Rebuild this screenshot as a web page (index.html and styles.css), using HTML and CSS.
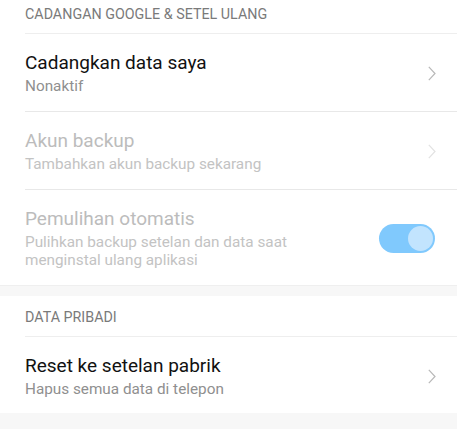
FILE: index.html
```html
<!DOCTYPE html>
<html lang="id">
<head>
  <meta charset="UTF-8">
  <meta name="viewport" content="width=device-width, initial-scale=1.0">
  <title>Cadangan &amp; setel ulang</title>
  <link rel="stylesheet" href="styles.css">
</head>
<body>
  <div class="page">
    <!-- Cadangan Google -->
    <div class="section">
      <div class="section-title first">CADANGAN GOOGLE &amp; SETEL ULANG</div>
      <div class="list">
        <div class="row">
          <div class="row-text">
            <div class="row-title">Cadangkan data saya</div>
            <div class="row-sub">Nonaktif</div>
          </div>
          <svg class="chevron" width="8" height="15" viewBox="0 0 8 15"><polyline points="0.8,0.8 7,7.5 0.8,14.2" fill="none" stroke="currentColor" stroke-width="1.2"/></svg>
        </div>
        <div class="row disabled">
          <div class="row-text">
            <div class="row-title">Akun backup</div>
            <div class="row-sub">Tambahkan akun backup sekarang</div>
          </div>
          <svg class="chevron" width="8" height="15" viewBox="0 0 8 15"><polyline points="0.8,0.8 7,7.5 0.8,14.2" fill="none" stroke="currentColor" stroke-width="1.2"/></svg>
        </div>
        <div class="row disabled last">
          <div class="row-text">
            <div class="row-title">Pemulihan otomatis</div>
            <div class="row-sub">Pulihkan backup setelan dan data saat<br>menginstal ulang aplikasi</div>
          </div>
          <div class="toggle on"><span class="knob"></span></div>
        </div>
      </div>
    </div>

    <div class="gap"></div>

    <!-- Data pribadi -->
    <div class="section">
      <div class="section-title">DATA PRIBADI</div>
      <div class="list">
        <div class="row last short">
          <div class="row-text">
            <div class="row-title">Reset ke setelan pabrik</div>
            <div class="row-sub">Hapus semua data di telepon</div>
          </div>
          <svg class="chevron" width="8" height="15" viewBox="0 0 8 15"><polyline points="0.8,0.8 7,7.5 0.8,14.2" fill="none" stroke="currentColor" stroke-width="1.2"/></svg>
        </div>
      </div>
    </div>

    <div class="gap bottom"></div>
  </div>
</body>
</html>
```

FILE: styles.css
```css
/* pengaturan */
body {
  margin: 0;
  background-color: #fff;
  font-family: 'Roboto', 'Noto Sans', sans-serif;
  color: #111;
}
.page {
  width: 457px;
}
.section-title {
  margin-left: 25px;
  padding: 12px 0 10px;
  font-size: 14.3px;
  line-height: 18px;
  color: #7a7a7a;
  border-bottom: 1px solid #eeeeee;
}
.section-title.first {
  padding-top: 5px;
}
.list {
  margin-left: 25px;
}
.row {
  display: flex;
  align-items: center;
  justify-content: space-between;
  padding: 17px 21px 16px 0;
  border-bottom: 1px solid #e8e8e8;
}
.row.last {
  border-bottom: none;
}
.row.short {
  padding-bottom: 15px;
}
.row-title {
  font-size: 19px;
  line-height: 24px;
  color: #111;
}
.row-sub {
  margin-top: 2px;
  font-size: 15.3px;
  line-height: 18px;
  color: #8f8f8f;
}
.chevron {
  display: block;
  color: #b8b8b8;
}
.row.disabled .row-title {
  color: #bcbcbc;
}
.row.disabled .row-sub {
  color: #c3c3c3;
}
.row.disabled .chevron {
  color: #e2e2e2;
}
.toggle {
  position: relative;
  width: 56px;
  height: 29px;
  border-radius: 15px;
  background-color: #d8d8d8;
  margin-right: 1px;
}
.toggle.on {
  background-color: #80c9fd;
}
.knob {
  position: absolute;
  top: 2px;
  right: 2px;
  width: 25px;
  height: 25px;
  border-radius: 50%;
  background-color: #c2e4fe;
}
.gap {
  height: 10px;
  background-color: #f7f7f7;
  border-top: 1px solid #efefef;
}
.gap.bottom {
  height: 16px;
  border-top: none;
}
```
